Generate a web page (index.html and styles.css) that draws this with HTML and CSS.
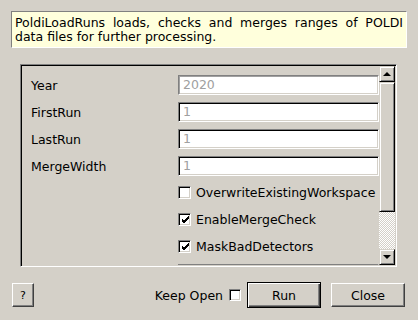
FILE: index.html
```html
<!DOCTYPE html>
<html lang="en">
  <head>
    <meta charset="UTF-8" />
    <title>PoldiLoadRuns</title>
    <link rel="stylesheet" href="styles.css">
  </head>
  <body>
    <div class="dialog">
      <div class="desc">
        <span class="desc-line">PoldiLoadRuns loads, checks and merges ranges of POLDI</span>
        <span>data files for further processing.</span>
      </div>

      <div class="frame">
        <div class="viewport">
          <div class="props">
            <div class="prop-label">Year</div>
            <div class="field field-first">2020</div>

            <div class="prop-label">FirstRun</div>
            <div class="field">1</div>

            <div class="prop-label">LastRun</div>
            <div class="field">1</div>

            <div class="prop-label">MergeWidth</div>
            <div class="field">1</div>

            <label class="check-row">
              <span class="check"></span>
              <span>OverwriteExistingWorkspace</span>
            </label>
            <label class="check-row">
              <span class="check checked">
                <svg width="9" height="9" viewBox="0 0 9 9"><path d="M1 4 L3 6 L8 1 M1 5 L3 7 L8 2 M1 6 L3 8 L8 3" stroke="#000" fill="none" stroke-width="1"/></svg>
              </span>
              <span>EnableMergeCheck</span>
            </label>
            <label class="check-row">
              <span class="check checked">
                <svg width="9" height="9" viewBox="0 0 9 9"><path d="M1 4 L3 6 L8 1 M1 5 L3 7 L8 2 M1 6 L3 8 L8 3" stroke="#000" fill="none" stroke-width="1"/></svg>
              </span>
              <span>MaskBadDetectors</span>
            </label>

            <div class="prop-label"></div>
            <div class="field"></div>
          </div>
        </div>

        <div class="scrollbar">
          <div class="sb-btn"><span class="arrow-up"></span></div>
          <div class="sb-handle"></div>
          <div class="sb-track"></div>
          <div class="sb-btn"><span class="arrow-down"></span></div>
        </div>
      </div>

      <div class="footer">
        <button class="btn btn-help">?</button>
        <div class="spacer"></div>
        <span class="keep-label">Keep Open</span>
        <span class="check keep-check"></span>
        <button class="btn btn-default">Run</button>
        <button class="btn btn-close">Close</button>
      </div>
    </div>
  </body>
</html>
```

FILE: styles.css
```css
* {
  margin: 0;
  padding: 0;
  box-sizing: border-box;
}

body {
  font-family: "DejaVu Sans", sans-serif;
  font-size: 12.5px;
  background: #d4d0c8;
  color: #000;
  width: 418px;
  height: 320px;
  overflow: hidden;
}

.dialog {
  display: flex;
  flex-direction: column;
  height: 320px;
  padding-top: 11px;
}

/* description box */
.desc {
  margin-left: 11px;
  width: 396px;
  height: 37px;
  background: #ffffdc;
  border-top: 1px solid #808080;
  border-left: 1px solid #808080;
  border-right: 1px solid #fff;
  border-bottom: 1px solid #fff;
  padding: 4px 3px 3px 3px;
  line-height: 14px;
}

.desc span {
  display: block;
  white-space: nowrap;
}

.desc .desc-line {
  text-align: justify;
  text-align-last: justify;
}

/* sunken scroll area */
.frame {
  margin-top: 16px;
  margin-left: 20px;
  width: 377px;
  height: 203px;
  border-top: 1px solid #808080;
  border-left: 1px solid #808080;
  border-right: 1px solid #fff;
  border-bottom: 1px solid #fff;
  box-shadow: inset 1px 1px #000, inset -1px -1px #d4d0c8;
  padding: 1px;
  display: flex;
}

.viewport {
  flex: 1;
  overflow: hidden;
}

.props {
  display: grid;
  grid-template-columns: 147px 1fr;
  grid-auto-rows: 20px;
  row-gap: 7px;
  padding: 9px 0 0 9px;
}

.prop-label {
  display: flex;
  align-items: center;
}

.field {
  background: #fff;
  border-top: 1px solid #808080;
  border-left: 1px solid #808080;
  border-right: 1px solid #fff;
  border-bottom: 1px solid #fff;
  box-shadow: inset 1px 1px #000, inset -1px -1px #d4d0c8;
  color: #a0a0a0;
  padding-left: 4px;
  line-height: 18px;
}

.field-first {
  box-shadow: inset 1px 1px #a0a0a0, inset -1px -1px #d4d0c8;
}

.check-row {
  grid-column: 2;
  display: flex;
  align-items: center;
  gap: 5px;
  height: 19px;
}

.check {
  width: 13px;
  height: 13px;
  background: #fff;
  border-top: 1px solid #808080;
  border-left: 1px solid #808080;
  border-right: 1px solid #fff;
  border-bottom: 1px solid #fff;
  box-shadow: inset 1px 1px #000, inset -1px -1px #d4d0c8;
  display: flex;
  align-items: center;
  justify-content: center;
  flex-shrink: 0;
}

.check svg {
  display: block;
  margin-left: 1px;
}

/* scrollbar */
.scrollbar {
  width: 16px;
  display: flex;
  flex-direction: column;
}

.sb-btn,
.sb-handle {
  background: #d4d0c8;
  border-top: 1px solid #d4d0c8;
  border-left: 1px solid #d4d0c8;
  border-right: 1px solid #000;
  border-bottom: 1px solid #000;
  box-shadow: inset 1px 1px #fff, inset -1px -1px #808080;
}

.sb-btn {
  height: 16px;
  display: flex;
  align-items: center;
  justify-content: center;
}

.sb-handle {
  height: 130px;
}

.sb-track {
  flex: 1;
  background: repeating-conic-gradient(#fff 0 25%, #d4d0c8 0 50%) 0 0 / 2px 2px;
}

.arrow-up,
.arrow-down {
  width: 0;
  height: 0;
  border-left: 4px solid transparent;
  border-right: 4px solid transparent;
}

.arrow-up {
  border-bottom: 4px solid #000;
}

.arrow-down {
  border-top: 4px solid #000;
}

/* footer */
.footer {
  display: flex;
  align-items: center;
  margin-top: 15px;
  padding: 0 13px 0 12px;
  height: 26px;
}

.spacer {
  flex: 1;
}

.btn {
  font-family: "DejaVu Sans", sans-serif;
  font-size: 12.5px;
  color: #000;
  background: #d4d0c8;
  border-top: 1px solid #fff;
  border-left: 1px solid #fff;
  border-right: 1px solid #404040;
  border-bottom: 1px solid #404040;
  box-shadow: inset -1px -1px #808080;
  height: 24px;
}

.btn-help {
  width: 22px;
  font-size: 11px;
}

.keep-label {
  margin-right: 6px;
}

.keep-check {
  width: 12px;
  height: 12px;
  margin-right: 6px;
}

.btn-default {
  width: 74px;
  height: 26px;
  border: 1px solid #000;
  box-shadow: inset 1px 1px #fff, inset -1px -1px #404040, inset -2px -2px #808080;
  margin-right: 10px;
}

.btn-close {
  width: 74px;
}
```
